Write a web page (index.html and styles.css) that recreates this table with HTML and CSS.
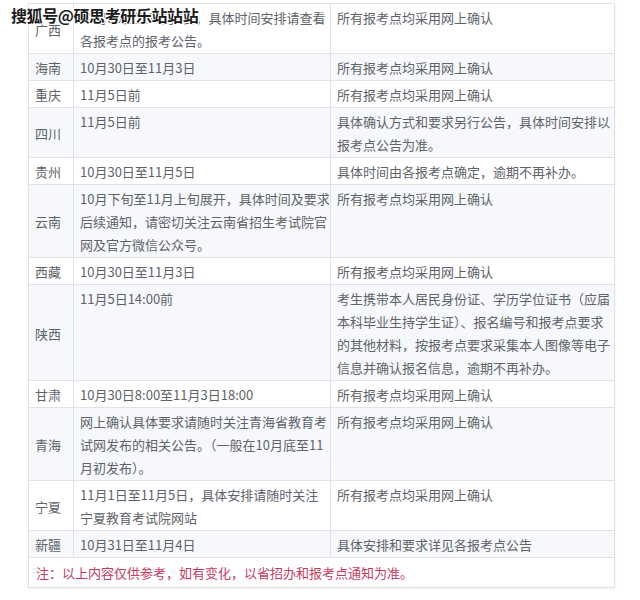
FILE: index.html
```html
<!DOCTYPE html>
<html lang="zh-CN">
<head>
<meta charset="utf-8">
<title>确认安排</title>
<link rel="stylesheet" href="styles.css">
</head>
<body>
<div class="page">
  <div class="watermark">搜狐号@硕思考研乐站站站</div>
  <table class="schedule">
    <colgroup>
      <col class="c-prov">
      <col class="c-date">
      <col class="c-note">
    </colgroup>
    <tbody>
      <tr class="odd"><td class="prov">广西</td><td>10月30日至11月3日，具体时间安排请查看<br>各报考点的报考公告。</td><td>所有报考点均采用网上确认</td></tr>
      <tr class="even"><td class="prov">海南</td><td>10月30日至11月3日</td><td>所有报考点均采用网上确认</td></tr>
      <tr class="odd"><td class="prov">重庆</td><td>11月5日前</td><td>所有报考点均采用网上确认</td></tr>
      <tr class="even"><td class="prov">四川</td><td>11月5日前</td><td>具体确认方式和要求另行公告，具体时间安排以<br>报考点公告为准。</td></tr>
      <tr class="odd"><td class="prov">贵州</td><td>10月30日至11月5日</td><td>具体时间由各报考点确定，逾期不再补办。</td></tr>
      <tr class="even"><td class="prov">云南</td><td>10月下旬至11月上旬展开，具体时间及要求<br>后续通知，请密切关注云南省招生考试院官<br>网及官方微信公众号。</td><td>所有报考点均采用网上确认</td></tr>
      <tr class="odd"><td class="prov">西藏</td><td>10月30日至11月3日</td><td>所有报考点均采用网上确认</td></tr>
      <tr class="even"><td class="prov">陕西</td><td>11月5日14:00前</td><td>考生携带本人居民身份证、学历学位证书（应届<br>本科毕业生持学生证）、报名编号和报考点要求<br>的其他材料，按报考点要求采集本人图像等电子<br>信息并确认报名信息，逾期不再补办。</td></tr>
      <tr class="odd"><td class="prov">甘肃</td><td>10月30日8:00至11月3日18:00</td><td>所有报考点均采用网上确认</td></tr>
      <tr class="even"><td class="prov">青海</td><td>网上确认具体要求请随时关注青海省教育考<br>试网发布的相关公告。（一般在10月底至11<br>月初发布）。</td><td>所有报考点均采用网上确认</td></tr>
      <tr class="odd"><td class="prov">宁夏</td><td>11月1日至11月5日，具体安排请随时关注<br>宁夏教育考试院网站</td><td>所有报考点均采用网上确认</td></tr>
      <tr class="even"><td class="prov">新疆</td><td>10月31日至11月4日</td><td>具体安排和要求详见各报考点公告</td></tr>
      <tr class="odd"><td class="remark" colspan="3">注：以上内容仅供参考，如有变化，以省招办和报考点通知为准。</td></tr>
    </tbody>
  </table>
</div>
</body>
</html>
```

FILE: styles.css
```css
html, body {
  margin: 0;
  padding: 0;
  background: #ffffff;
}

.page {
  position: relative;
  width: 640px;
  height: 600px;
  overflow: hidden;
  padding-top: 3px;
  box-sizing: border-box;
  font-family: "Noto Sans CJK SC", "Noto Sans", sans-serif;
}

.schedule {
  margin-left: 28px;
  width: 586px;
  border-collapse: collapse;
  table-layout: fixed;
  font-size: 13px;
  line-height: 23px;
  color: #5e636a;
  box-shadow: 0 1px 3px rgba(0, 0, 0, 0.06);
}

.c-prov { width: 45px; }
.c-date { width: 257px; }
.c-note { width: 284px; }

.schedule td {
  border: 1px solid #dfe3e9;
  padding: 2px 0 1px 6px;
  vertical-align: top;
  white-space: nowrap;
  overflow: visible;
}

.schedule td + td {
  padding-left: 6px;
}

.schedule td.prov {
  vertical-align: middle;
  padding-left: 6px;
}

.odd td { background: #ffffff; }
.even td { background: #f6f8fb; }

.schedule td.remark {
  color: #c73a5e;
  padding: 3px 0 3px 7px;
  background: #ffffff;
}

.watermark {
  position: absolute;
  left: 11px;
  top: 3px;
  font-size: 16px;
  font-weight: 700;
  line-height: 24px;
  letter-spacing: -0.4px;
  color: #1b1b1b;
  text-shadow:
    1px 0 0 #fff, -1px 0 0 #fff, 0 1px 0 #fff, 0 -1px 0 #fff,
    1px 1px 0 #fff, -1px -1px 0 #fff, 1px -1px 0 #fff, -1px 1px 0 #fff;
  z-index: 2;
}
```
